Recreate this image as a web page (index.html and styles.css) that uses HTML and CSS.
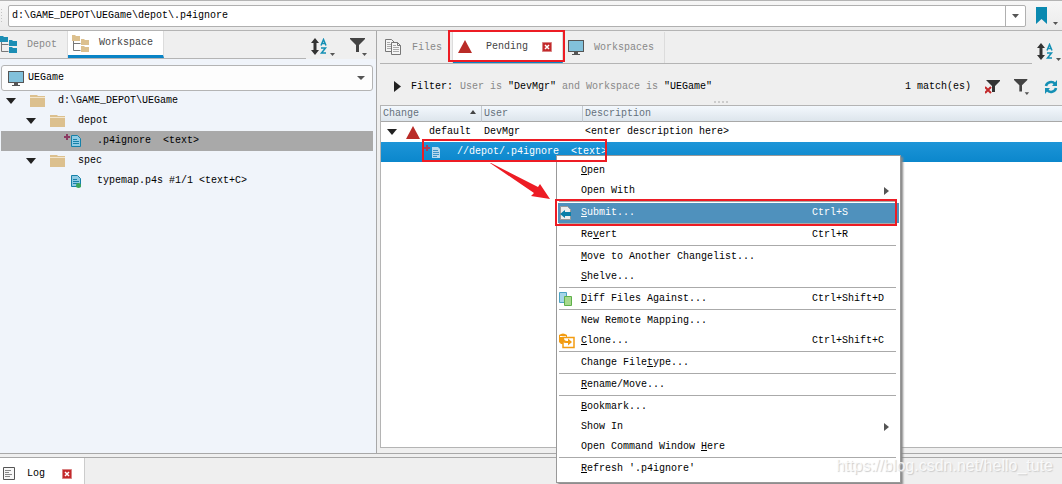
FILE: index.html
```html
<!DOCTYPE html>
<html lang="en">
<head>
    <meta charset="utf-8">
    <meta name="viewport" content="width=device-width,initial-scale=1.0">
    <title>UEGame</title>
    <link rel="stylesheet" href="styles.css">
</head>
<body>

<!-- shared icons -->
<svg class="defs" width="0" height="0">
    <symbol id="tree" viewBox="0 0 17 17">
        <path d="M1.500 5v10.500h7M1.500 8.500h7" fill="none" stroke="#777"/>
        <path fill="currentColor" d="M0 0h3l1 1h4v5H0zM9 4h3l1 1h4v5H9zM9 11h3l1 1h4v5H9z"/>
    </symbol>
    <symbol id="folder" viewBox="0 0 16 12">
        <path fill="#dcc08e" d="M0 0h7l1 1h7v11H0z"/>
        <path fill="#f3e6cd" d="M0 2h15v1H0z"/>
    </symbol>
    <symbol id="monitor" viewBox="0 0 16 15">
        <path fill="#555" d="M0 0h16v12H0zM6 12h4v2h2v1H4v-1h2z"/>
        <path fill="#82c1db" d="M1 1h14v10H1z"/>
    </symbol>
    <symbol id="sort" viewBox="0 0 25 19">
        <path fill="#333" d="M4 0l4 5H5.500v7H8l-4 5-4-5h2.500V5H0z"/>
        <path fill="none" stroke="#1590b5" stroke-width="1.500" d="M10 7.500l2.500-6 2.500 6M11 5.500h3M10 10h4.500l-4 5H15"/>
        <path fill="#555" d="M19 15h5l-2.500 3z"/>
    </symbol>
    <symbol id="funnel" viewBox="0 0 18 18">
        <path fill="#444" d="M0 0h15v1L9 7v7H6V7L0 1z"/>
        <path fill="#555" d="M12 15h5l-2.500 3z"/>
    </symbol>
    <symbol id="doc" viewBox="0 0 10 12">
        <path fill="#8fcbe4" stroke="#1681a9" d="M.5.5h6l3 3v8h-9z"/>
        <path fill="none" stroke="#1681a9" d="M2 4.500h4M2 6.500h6M2 8.500h6"/>
    </symbol>
    <symbol id="triangle" viewBox="0 0 14 13"><path fill="#b92b27" d="M7 0l7 13H0z"/></symbol>
    <symbol id="close" viewBox="0 0 10 10">
        <path fill="#c3292b" stroke="#d98283" d="M.5.5h9v9h-9z"/>
        <path stroke="#fff" stroke-width="1.500" d="M3 3l4 4M7 3L3 7"/>
    </symbol>
    <symbol id="down" viewBox="0 0 10 6"><path fill="#222" d="M0 0h10L5 6z"/></symbol>
</svg>

<div class="address">
    <span class="grip"></span>
    <div class="address-box">
        <input type="text" aria-label="Address" value="d:\GAME_DEPOT\UEGame\depot\.p4ignore">
        <button type="button" aria-label="History"><svg width="7" height="4"><path fill="#555" d="M0 0h7L3.500 4z"/></svg></button>
    </div>
    <button type="button" class="tool" aria-label="Bookmarks">
        <svg width="23" height="18"><path fill="#0a89b0" d="M0 0h11v17l-5.500-5L0 17z"/><path fill="#555" d="M17 15h5l-2.500 3z"/></svg>
    </button>
</div>

<div class="main">
    <div class="side">
        <div class="side-top">
            <div class="tabs side-tabs">
                <button type="button" class="tab"><svg class="blue" width="17" height="17"><use href="#tree"/></svg>Depot</button>
                <button type="button" class="tab on"><svg class="tan" width="17" height="17"><use href="#tree"/></svg>Workspace</button>
            </div>
            <div class="tools">
                <button type="button" class="tool" aria-label="Sort"><svg width="25" height="19"><use href="#sort"/></svg></button>
                <button type="button" class="tool" aria-label="Filter"><svg width="18" height="18"><use href="#funnel"/></svg></button>
            </div>
        </div>
        <div class="combo">
            <svg width="16" height="15"><use href="#monitor"/></svg>
            <select aria-label="Workspace"><option>UEGame</option></select>
            <svg width="8" height="4"><path fill="#555" d="M0 0h8L4 4z"/></svg>
        </div>
        <ul class="tree">
            <li><svg class="arrow" width="10" height="6"><use href="#down"/></svg><svg class="ico" width="16" height="12"><use href="#folder"/></svg>d:\GAME_DEPOT\UEGame</li>
            <li class="lv1"><svg class="arrow" width="10" height="6"><use href="#down"/></svg><svg class="ico" width="16" height="12"><use href="#folder"/></svg>depot</li>
            <li class="lv2 on"><svg class="file" width="17" height="14"><path stroke="#8b3a62" stroke-width="2" d="M0 3h6M3 0v6"/><use href="#doc" x="7" y="1" width="10" height="12"/></svg>.p4ignore&nbsp; &lt;text&gt;</li>
            <li class="lv1"><svg class="arrow" width="10" height="6"><use href="#down"/></svg><svg class="ico" width="16" height="12"><use href="#folder"/></svg>spec</li>
            <li class="lv2"><svg class="file" width="17" height="14"><use href="#doc" x="7" y="1" width="10" height="12"/><circle cx="14.500" cy="11.500" r="2.500" fill="#3ba55a"/></svg>typemap.p4s #1/1 &lt;text+C&gt;</li>
        </ul>
    </div>

    <div class="content">
        <div class="content-top">
            <div class="tabs">
                <button type="button" class="tab"><svg width="17" height="17"><path fill="#f5f5f5" stroke="#777" d="M.5.5h6l3 3v9h-9z"/><path stroke="#aaa" d="M2 3.500h3M2 5.500h4M2 7.500h4M2 9.500h4"/><path fill="#f5f5f5" stroke="#777" d="M6.500 3.500h6l3 3v9h-9z"/><path fill="none" stroke="#777" d="M12.500 3.500v3h3"/><path stroke="#aaa" d="M8 6.500h3M8 8.500h6M8 10.500h6M8 12.500h6"/></svg>Files</button>
                <button type="button" class="tab on"><svg width="14" height="13"><use href="#triangle"/></svg>Pending<svg width="10" height="10"><use href="#close"/></svg></button>
                <button type="button" class="tab"><svg width="16" height="15"><use href="#monitor"/></svg>Workspaces</button>
            </div>
            <button type="button" class="tool" aria-label="Sort"><svg width="25" height="19"><use href="#sort"/></svg></button>
        </div>
        <div class="filter">
            <button type="button" class="tool" aria-label="Expand filter"><svg width="7" height="11"><path fill="#222" d="M0 0l7 5.500L0 11z"/></svg></button>
            <span class="label">Filter:</span>
            <span class="query">User is <b>"DevMgr"</b> and Workspace is <b>"UEGame"</b></span>
            <span class="count">1 match(es)</span>
            <button type="button" class="tool" aria-label="Clear filter"><svg width="15" height="14"><path fill="#333" d="M1 0h14v1l-5 5v6H7V6z"/><path stroke="#c3292b" stroke-width="2" d="M0 7l6 6M6 7l-6 6"/></svg></button>
            <button type="button" class="tool" aria-label="Filter options"><svg width="16" height="16" viewBox="0 0 18 18"><use href="#funnel"/></svg></button>
            <button type="button" class="tool" aria-label="Refresh"><svg width="14" height="14"><path fill="none" stroke="#1590b5" stroke-width="2.500" d="M2 6a5 4.500 0 0 1 9-2M12 8a5 4.500 0 0 1-9 2"/><path fill="#1590b5" d="M13 0v6H8zM1 14V8h5z"/></svg></button>
        </div>
        <div class="splitter"><span></span></div>
        <div class="list">
            <table>
                <thead>
                    <tr><th class="c1"><div>Change<svg width="6" height="4"><path fill="#444" d="M0 4h6L3 0z"/></svg></div></th><th class="c2">User</th><th>Description</th></tr>
                </thead>
                <tbody>
                    <tr>
                        <td><div class="cell"><svg width="10" height="6"><use href="#down"/></svg><svg width="14" height="13"><use href="#triangle"/></svg>default</div></td>
                        <td>DevMgr</td>
                        <td>&lt;enter description here&gt;</td>
                    </tr>
                    <tr class="on">
                        <td colspan="3"><div class="cell sub"><svg width="16" height="14"><path stroke="#a83a5b" stroke-width="2" d="M0 3h6M3 0v6"/><path fill="#b7d9ee" d="M8 2h6l2 2v9H8z"/><path stroke="#3d93c9" d="M9 5.500h5M9 7.500h6M9 9.500h6M9 11.500h4"/></svg>//depot/.p4ignore&nbsp; &lt;text&gt;</div></td>
                    </tr>
                </tbody>
            </table>
        </div>
    </div>
</div>

<div class="bottom">
    <div class="log">
        <svg width="12" height="13"><path fill="#f7f7f7" stroke="#555" d="M.5.5h11v12H.5z"/><path stroke="#888" d="M2 3.500h6M2 5.500h4M2 7.500h7M2 9.500h5"/></svg>
        <span>Log</span>
        <button type="button" class="tool" aria-label="Close log"><svg width="10" height="10"><use href="#close"/></svg></button>
    </div>
</div>

<div class="menu">
    <button type="button"><i></i><span><u>O</u>pen</span></button>
    <button type="button"><i></i><span>Open With</span><svg class="more" width="5" height="8"><path fill="#555" d="M0 0l5 4-5 4z"/></svg></button>
    <hr>
    <button type="button" class="on"><i><svg width="13" height="14"><path fill="#eee" stroke="#999" d="M1.500.5h7l3 3v10h-10z"/><path fill="#0a7fa8" d="M1 8l5-4v2h6v4H6v2z"/></svg></i><span><u>S</u>ubmit...</span><kbd>Ctrl+S</kbd></button>
    <hr>
    <button type="button"><i></i><span>Re<u>v</u>ert</span><kbd>Ctrl+R</kbd></button>
    <hr>
    <button type="button"><i></i><span><u>M</u>ove to Another Changelist...</span></button>
    <button type="button"><i></i><span><u>S</u>helve...</span></button>
    <hr>
    <button type="button"><i><svg width="14" height="14"><path fill="#a5d5e8" stroke="#4ba3c3" d="M.5.500h7v10h-7z"/><path fill="#a6d98d" stroke="#5fb04a" d="M5.500 4.500h7v9h-7z"/></svg></i><span><u>D</u>iff Files Against...</span><kbd>Ctrl+Shift+D</kbd></button>
    <hr>
    <button type="button"><i></i><span>New Remote Mapping...</span></button>
    <button type="button"><i><svg width="16" height="16"><path fill="#f39c12" d="M0 2q4-3 8 0v9H2l-2-2z"/><path stroke="#fff" d="M1 3.500h6"/><path fill="#fff" stroke="#f39c12" stroke-width="1.500" d="M4 4.500h11v10H4z"/><path fill="#f39c12" d="M2 5h3q0 3 3 3h1V5.500L13 9l-4 3.500V10H7Q3 10 2 5z"/></svg></i><span><u>C</u>lone...</span><kbd>Ctrl+Shift+C</kbd></button>
    <hr>
    <button type="button"><i></i><span>Change File<u>t</u>ype...</span></button>
    <hr>
    <button type="button"><i></i><span><u>R</u>ename/Move...</span></button>
    <hr>
    <button type="button"><i></i><span><u>B</u>ookmark...</span></button>
    <button type="button"><i></i><span>Show In</span><svg class="more" width="5" height="8"><path fill="#555" d="M0 0l5 4-5 4z"/></svg></button>
    <button type="button"><i></i><span>Open Command Window <u>H</u>ere</span></button>
    <hr>
    <button type="button"><i></i><span><u>R</u>efresh '.p4ignore'</span></button>
</div>

<!-- red marks and arrow -->
<svg class="marks" width="900" height="230">
    <g fill="none" stroke="#ed1c24" stroke-width="2">
        <path d="M449 31h115v30H449zM423 140h183v21H423zM556 200h340v25H556z"/>
    </g>
    <path fill="#ed1c24" d="M490 163h1l47 24 2-3 10 15-19-3 3-3z"/>
</svg>
<div class="watermark">https://blog.csdn.net/hello_tute</div>

</body>
</html>
```
FILE: styles.css
```css
*{
    box-sizing: border-box;
    margin: 0;
    padding: 0;
}
body{
    position: relative;
    display: flex;
    flex-direction: column;
    min-height: 100vh;
    font: 10px/20px "Liberation Mono", monospace;
    color: #000;
    background: #efefef;
}
button, input, select, kbd{
    font: inherit;
    color: inherit;
    border: 0;
    background: none;
}
svg{
    display: block;
    flex: none;
}
ul{
    list-style: none;
}
.defs{
    position: absolute;
}
.tool{
    display: flex;
}

/* address bar */
.address{
    display: flex;
    align-items: center;
    height: 31px;
    padding-right: 3px;
    border-top: 1px solid #b4b4b4;
    border-bottom: 1px solid #b4b4b4;
    background: linear-gradient(#f6f6f6, #ebebeb);
}
.grip{
    width: 4px;
    height: 16px;
    margin-right: 4px;
    background: radial-gradient(#c4c4c4 1px, transparent 1px) 0 0/3px 3px;
}
.address-box{
    flex: 1;
    display: flex;
    height: 22px;
    margin-right: 10px;
    border: 1px solid #b0b0b0;
    border-radius: 2px;
    background: #fff;
}
.address-box input{
    flex: 1;
    padding: 0 3px;
}
.address-box button{
    display: flex;
    align-items: center;
    justify-content: center;
    width: 20px;
    border-left: 1px solid #b0b0b0;
}

/* panes */
.main{
    flex: 1;
    display: grid;
    grid-template-columns: 377px minmax(0, 1fr);
    border-bottom: 1px solid #a8a8a8;
}
.side{
    padding-right: 3px;
    border-right: 1px solid #a8a8a8;
    background: #f0f4fa;
}
.side-top{
    display: flex;
    height: 28px;
    margin-right: -3px;
    background: #efefef;
}
.tabs{
    flex: 1;
    display: flex;
    border-bottom: 1px solid #b4b4b4;
}
.tab{
    display: flex;
    align-items: center;
    gap: 10px;
    padding: 0 10px 0 4px;
    border-right: 1px solid #dcdcdc;
    color: #888;
}
.tab.on{
    color: #444;
    border-bottom: 3px solid #0a84c6;
    background: #fff;
}
.side-tabs .tab:first-child{
    padding-left: 0;
}
.tools{
    display: flex;
    align-items: center;
    gap: 14px;
    padding: 4px 8px 0 5px;
}
.blue{
    color: #1c8eb4;
}
.tan{
    color: #dcc08e;
}
.combo{
    display: flex;
    align-items: center;
    gap: 4px;
    height: 26px;
    margin: 6px 0 0 1px;
    padding: 0 7px 0 6px;
    border: 1px solid #b4b4b4;
    border-radius: 3px;
    background: #fdfdfd;
}
.combo select{
    flex: 1;
    appearance: none;
}
.tree li{
    display: flex;
    align-items: center;
    height: 20px;
    margin-left: 1px;
    padding-left: 5px;
}
.tree .lv1{
    padding-left: 25px;
}
.tree .lv2{
    padding-left: 63px;
}
.tree .on{
    background: #a9a9a9;
}
.arrow{
    margin-right: 14px;
}
.ico{
    margin-right: 12px;
}
.file{
    margin-right: 16px;
}

.content{
    display: flex;
    flex-direction: column;
    padding: 1px 0 5px 3px;
}
.content-top{
    display: flex;
    align-items: center;
    height: 32px;
}
.content-top .tabs{
    height: 32px;
}
.content-top .tool{
    margin: 8px 0 0 5px;
}
.content .tab{
    padding: 0 10px 0 5px;
}
.content .tab.on{
    gap: 14px;
    border-bottom-width: 2px;
}
.filter{
    display: flex;
    align-items: center;
    height: 37px;
    padding: 8px 4px 0 14px;
}
.label{
    margin: 0 7px 0 10px;
}
.query{
    color: #888;
}
.query b{
    font-weight: normal;
    color: #000;
}
.count{
    margin-left: auto;
}
.filter .tool{
    margin-left: 14px;
}
.filter .tool:first-child{
    margin-left: 0;
}
.splitter{
    height: 4px;
}
.splitter span{
    display: block;
    width: 14px;
    height: 2px;
    margin: 0 auto;
    border-top: 2px dotted #ccc;
}
.list{
    flex: 1;
    border: 1px solid #b4b4b4;
    border-right: 0;
    background: #fff;
}
table{
    width: 100%;
    border-spacing: 0;
    table-layout: fixed;
}
th{
    height: 16px;
    padding: 0 2px;
    border-right: 1px solid #c4cad0;
    border-bottom: 1px solid #a8a8a8;
    font-weight: normal;
    line-height: 15px;
    text-align: left;
    color: #65717c;
    background: linear-gradient(#f3f8fd, #dde5ec);
}
th:last-child{
    border-right: 0;
}
th div{
    display: flex;
    justify-content: space-between;
    padding-right: 3px;
}
th svg{
    margin-top: 4px;
}
.c1, .c2{
    width: 101px;
}
td{
    height: 20px;
    padding-left: 2px;
}
.cell{
    display: flex;
    align-items: center;
    gap: 9px;
    padding-left: 4px;
}
.sub{
    gap: 17px;
    padding-left: 41px;
}
tr.on{
    color: #fff;
    background: linear-gradient(#1d95d8, #0b87cc);
}

/* log */
.bottom{
    height: 27px;
    margin-top: 3px;
    border-top: 1px solid #a8a8a8;
}
.log{
    display: flex;
    align-items: center;
    width: 85px;
    height: 26px;
    padding: 5px 0 0 3px;
    border-right: 1px solid #ccc;
    background: #fff;
}
.log span{
    margin: 0 17px 0 12px;
}

/* context menu */
.menu{
    position: absolute;
    left: 556px;
    top: 155px;
    width: 345px;
    padding: 5px 1px 3px;
    border: 1px solid #999;
    background: #fff;
    box-shadow: 2px 2px 2px #888;
}
.menu button{
    display: flex;
    align-items: center;
    width: 100%;
    height: 20px;
    padding-left: 1px;
    text-align: left;
}
.menu i{
    width: 22px;
}
.menu span{
    flex: 1;
}
.menu kbd{
    width: 87px;
}
.menu .more{
    margin-right: 10px;
}
.menu .on{
    color: #fff;
    background: #4f91bd;
}
.menu hr{
    height: 2px;
    margin: 0 3px 0 1px;
    border: 0;
    border-top: 1px solid #aaa;
}

.marks{
    position: absolute;
    left: 0;
    top: 0;
    pointer-events: none;
}
.watermark{
    position: absolute;
    right: 9px;
    bottom: 8px;
    font: 16px/20px "Liberation Sans", sans-serif;
    color: rgba(255, 255, 255, .8);
    text-shadow: 1px 1px 1px #ccc;
}
```
